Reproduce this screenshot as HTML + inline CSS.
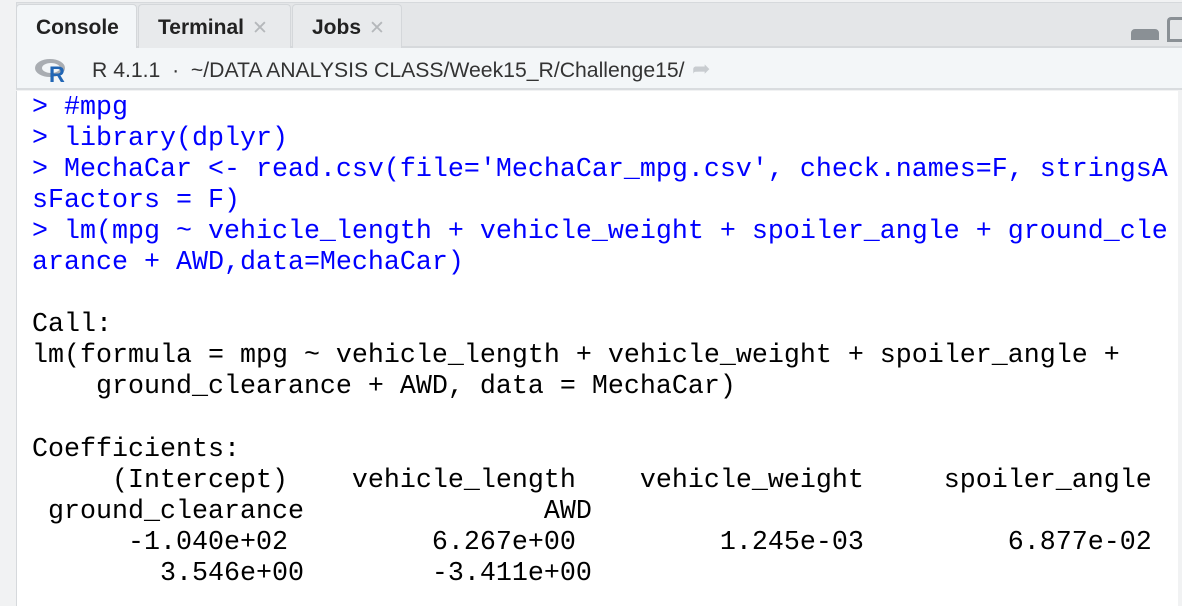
<!DOCTYPE html>
<html><head><meta charset="utf-8"><style>
*{margin:0;padding:0;box-sizing:border-box}
body{width:1182px;height:606px;overflow:hidden;background:#f1f2f3;position:relative;font-family:"Liberation Sans",sans-serif}
#tabbar{position:absolute;left:16px;top:2px;width:1166px;height:46px;background:#e4e6e8;border-bottom:2px solid #d6d9dc;border-top:1px solid #d6d9dc;border-left:1px solid #d6d9dc}
.tab{position:absolute;top:1px;height:44px;background:#e8eaec;border:1px solid #d4d7da;border-bottom:none;border-radius:4px 4px 0 0;font-size:21px;font-weight:bold;color:#222;padding:11px 0 0 19px}
.tab .x{color:#b5b8bb;font-weight:normal;margin-left:8px;font-size:19px}
#toolbar{position:absolute;left:16px;top:48px;width:1166px;height:42px;background:#f3f6f8;border-bottom:2px solid #d9dcdf;border-left:1px solid #d6d9dc;font-size:21.2px;color:#333}
#con{position:absolute;left:16px;top:91px;width:1162px;height:515px;background:#fff;border-left:1px solid #d6d9dc}
pre{position:absolute;left:15px;top:2px;font-family:"Liberation Mono",monospace;font-size:26.67px;line-height:31.05px;color:#000}
.b{color:#0000ff}
</style></head><body>
<div id="tabbar">
 <div class="tab" style="left:-1px;width:121px;background:#f3f6f8;height:46px">Console</div>
 <div class="tab" style="left:121px;width:153px">Terminal<span class="x">✕</span></div>
 <div class="tab" style="left:275px;width:110px">Jobs<span class="x">✕</span></div>
 <div style="position:absolute;left:1114px;top:26px;width:28px;height:11px;border:3px solid #8a9095;border-radius:4px 4px 0 0;background:#8a9095"></div>
 <div style="position:absolute;left:1150px;top:14px;width:20px;height:25px;border:3px solid #8a9095;border-radius:4px 0 0 0;border-right:none"></div>
</div>
<div id="toolbar">
 <svg style="position:absolute;left:17px;top:9px" width="36" height="26" viewBox="0 0 36 26"><ellipse cx="16" cy="11" rx="15" ry="9" fill="#a9adb2"/><ellipse cx="17" cy="11" rx="9" ry="5" fill="#f3f6f8"/><text x="15" y="25" font-family="Liberation Sans" font-weight="bold" font-size="22" fill="#2166b5">R</text></svg>
 <span style="position:absolute;left:75px;top:11px">R 4.1.1 &nbsp;·&nbsp; ~/DATA ANALYSIS CLASS/Week15_R/Challenge15/</span>
 <span style="position:absolute;left:675px;top:8px;color:#c8ccd0;font-size:22px">➦</span>
</div>
<div id="con"><pre><span class="b">&gt; #mpg
&gt; library(dplyr)
&gt; MechaCar &lt;- read.csv(file='MechaCar_mpg.csv', check.names=F, stringsA
sFactors = F)
&gt; lm(mpg ~ vehicle_length + vehicle_weight + spoiler_angle + ground_cle
arance + AWD,data=MechaCar)</span>

Call:
lm(formula = mpg ~ vehicle_length + vehicle_weight + spoiler_angle + 
    ground_clearance + AWD, data = MechaCar)

Coefficients:
     (Intercept)    vehicle_length    vehicle_weight     spoiler_angle  
 ground_clearance               AWD  
      -1.040e+02         6.267e+00         1.245e-03         6.877e-02  
        3.546e+00        -3.411e+00  
</pre></div>
</body></html>
